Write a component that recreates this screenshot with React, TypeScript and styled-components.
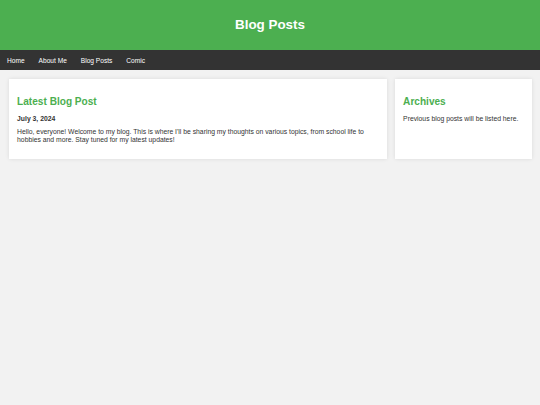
import React from "react";
import styled, { createGlobalStyle } from "styled-components";

const GlobalStyle = createGlobalStyle`
    html, body {
        margin: 0;
        padding: 0;
        background: #f2f2f2;
    }
    body {
        font-family: "Liberation Sans", Arial, sans-serif;
        font-size: 6.8px;
        color: #333;
    }
`;

const Header = styled.header`
    height: 50px;
    box-sizing: border-box;
    padding-bottom: 1px;
    background: #4caf50;
    color: #fff;
    display: flex;
    align-items: center;
    justify-content: center;
`;

const SiteTitle = styled.h1`
    margin: 0;
    font-size: 13.4px;
    font-weight: bold;
`;

const Nav = styled.nav`
    height: 20px;
    background: #333;
    display: flex;
    align-items: center;
`;

const NavLink = styled.a`
    color: #fff;
    text-decoration: none;
    padding: 0 7px;
    font-size: 6.6px;
`;

const Main = styled.main`
    display: flex;
    align-items: stretch;
    gap: 8px;
    padding: 8.5px 8.5px;
`;

const Card = styled.section<{ $wide?: boolean }>`
    background: #fff;
    padding: 0 8.6px;
    box-shadow: 0 0 4px rgba(0, 0, 0, 0.1);
    box-sizing: border-box;
    ${p => (p.$wide ? "flex: 1;" : "width: 137px; flex: none;")}
`;

const CardTitle = styled.h2`
    color: #4caf50;
    font-size: 10.1px;
    font-weight: bold;
    margin: 17px 0 8.3px;
`;

const DateLine = styled.p`
    font-weight: bold;
    margin: 0 0 6.7px;
`;

const Body = styled.p`
    margin: 0 0 15.5px;
    line-height: 7.4px;
`;

const links = ["Home", "About Me", "Blog Posts", "Comic"];

export default function App() {
    return (
        <>
            <GlobalStyle />
            <Header>
                <SiteTitle>Blog Posts</SiteTitle>
            </Header>
            <Nav>
                {links.map(l => (
                    <NavLink key={l} href="#">
                        {l}
                    </NavLink>
                ))}
            </Nav>
            <Main>
                <Card $wide>
                    <CardTitle>Latest Blog Post</CardTitle>
                    <DateLine>July 3, 2024</DateLine>
                    <Body>
                        Hello, everyone! Welcome to my blog. This is where I'll be sharing my
                        thoughts on various topics, from school life to hobbies and more. Stay
                        tuned for my latest updates!
                    </Body>
                </Card>
                <Card>
                    <CardTitle>Archives</CardTitle>
                    <Body>Previous blog posts will be listed here.</Body>
                </Card>
            </Main>
        </>
    );
}
